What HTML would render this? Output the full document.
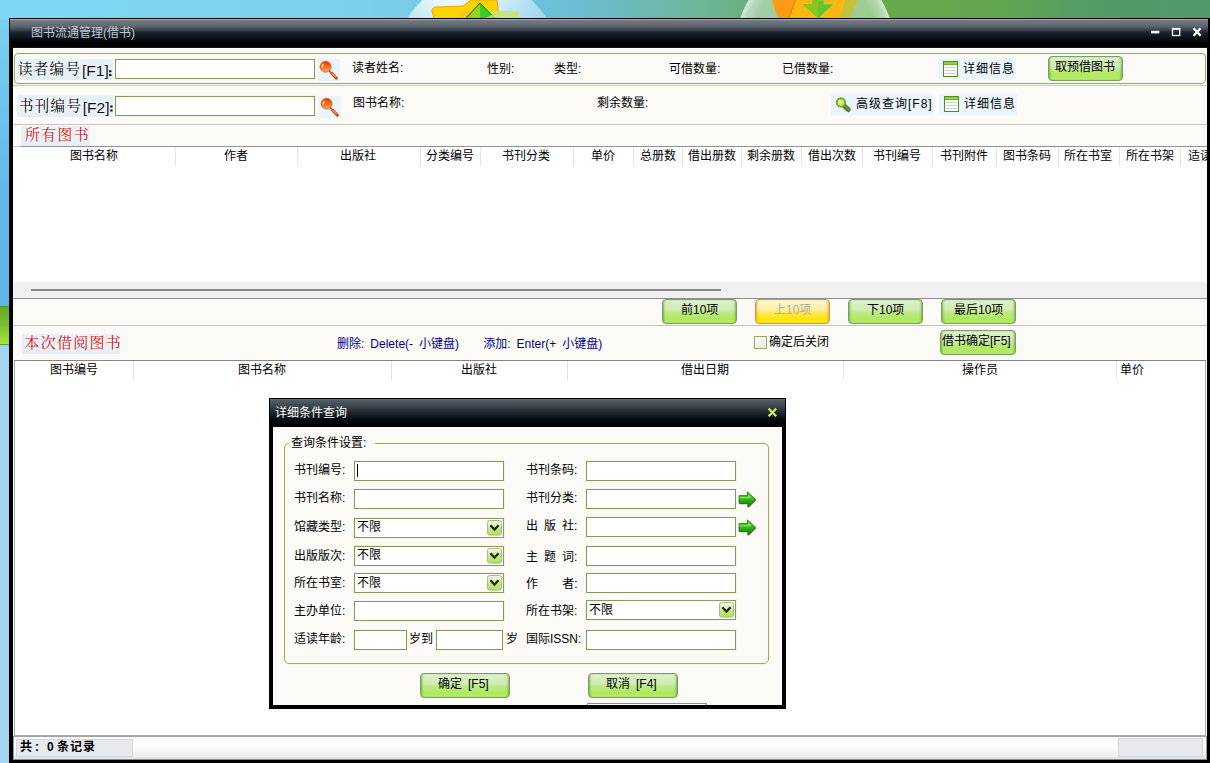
<!DOCTYPE html>
<html lang="zh-CN"><head><meta charset="utf-8"><title>图书流通管理(借书)</title><style>
html,body{margin:0;padding:0}
html{overflow:hidden;width:1210px;height:763px}
body{width:1210px;height:763px;position:relative;overflow:hidden;background:#7dd0ea;font-family:"Liberation Sans",sans-serif}
div,.a,.t{position:absolute}
.t{display:block;overflow:visible;white-space:pre;color:#000;font-size:12px;line-height:13px;word-spacing:2.7px;font-family:"Liberation Sans","Noto Sans CJK SC",sans-serif}
.k{font-family:"Liberation Serif","Noto Serif CJK SC",serif;text-shadow:0 0 2px #fff,0 0 2px #fff,0 0 3px #fff}
.lat{font-family:"Liberation Sans",sans-serif;white-space:nowrap;text-shadow:0 0 2px #fff,0 0 2px #fff}
.btn{box-sizing:border-box;border-radius:4px}
.btn.g{border:1px solid #7d9b6c;background:linear-gradient(#dcf1c9 0,#d0ebb4 42%,#bce883 56%,#afe95e 84%,#b6ee66 100%);box-shadow:inset 2px 0 2px -1px rgba(95,165,45,.75),inset -2px 0 2px -1px rgba(95,165,45,.75)}
.btn.y{border:1px solid #db943e;background:linear-gradient(#fdf6d4 0,#fcefa6 42%,#fee955 56%,#ffe508 84%,#ffe81c 100%);box-shadow:inset 2px 0 2px -1px rgba(240,150,30,.75),inset -2px 0 2px -1px rgba(240,150,30,.75)}
</style></head>
<body>
<svg class="a" style="left:0;top:0" width="1210" height="19" viewBox="0 0 1210 19">
<defs>
<linearGradient id="dg" x1="0" x2="1" y1="0" y2="0"><stop offset="0" stop-color="#7fd7f3"/><stop offset="0.3" stop-color="#7dd0ea"/><stop offset="0.45" stop-color="#6cc0dc"/><stop offset="0.5" stop-color="#6bbcc6"/><stop offset="0.54" stop-color="#6cb8ae"/><stop offset="0.58" stop-color="#6cb698"/><stop offset="0.615" stop-color="#69b080"/><stop offset="0.67" stop-color="#67ac60"/><stop offset="0.73" stop-color="#66a94a"/><stop offset="0.83" stop-color="#62a550"/><stop offset="0.9" stop-color="#549b68"/><stop offset="1" stop-color="#52996e"/></linearGradient>
<radialGradient id="bb1" cx=".38" cy="-.1" r=".75"><stop offset="0" stop-color="#fff" stop-opacity="1"/><stop offset=".35" stop-color="#fff" stop-opacity=".85"/><stop offset=".7" stop-color="#c4e6f5" stop-opacity=".75"/><stop offset="1" stop-color="#a9dbf0" stop-opacity=".7"/></radialGradient>
<radialGradient id="bb2" cx=".5" cy=".5" r=".5"><stop offset="0" stop-color="#d8ecd8" stop-opacity=".45"/><stop offset=".8" stop-color="#d8ecd8" stop-opacity=".5"/><stop offset=".93" stop-color="#e8f4e8" stop-opacity=".62"/><stop offset="1" stop-color="#f4faf4" stop-opacity=".8"/></radialGradient>
</defs>
<rect width="1210" height="19" fill="url(#dg)"/>
<circle cx="477" cy="60" r="81" fill="url(#bb1)"/>
<path d="M434 19 L432 11 Q432 7 437 7 L463 6 L471 0 L497 0 L499 19Z" fill="#ffd400" stroke="#f0a010" stroke-width="1"/>
<path d="M458 19 L459 13 Q460 11 463 11 L480 11 L480 19Z" fill="#ffc42a" opacity=".9"/><path d="M480 11 L516 11 Q519 11 519 14 L518 19 L480 19Z" fill="#c6e374" opacity=".9"/>
<path d="M465 19 L480 3 L495.5 19Z" fill="#35cf2a" stroke="#1d5c10" stroke-width="1"/>
<path d="M480 4 L480 19 L466 19Z" fill="#97d11f"/>
<path d="M484 19 L493 14 L495 19Z" fill="#a6e060"/>
<circle cx="815" cy="41" r="78" fill="url(#bb2)"/>
<path d="M772.5 0 Q774 10 779.5 19 L849 19 L857 0Z" fill="#ff9a14"/>
<path d="M795.5 0 L788.5 19 L839 19 L846 0Z" fill="#ffb512"/>
<path d="M795.5 0 L788.5 19" stroke="#e8820c" stroke-width="1.2"/>
<path d="M846 0 L857 0 L849 19 L839 19Z" fill="#c3c23c"/>
<path d="M812.3 0 L824.2 0 L824.2 4 L834 4 L818.2 18.6 L802.3 4 L812.3 4Z" fill="#67c22c" stroke="#a5e048" stroke-width=".8"/>
<path d="M812.3 0 L818.2 0 L818.2 18.6 L802.3 4 L812.3 4Z" fill="#86c81e"/>
</svg>
<div style="left:0px;top:19px;width:9px;height:287px;background:linear-gradient(#79d0f0,#62b8e8 60%,#5fb5e8)"></div>
<div style="left:0px;top:306px;width:9px;height:39px;background:linear-gradient(#62a825,#7cc030 50%,#a4e645);border-top:1px solid #4d8a2a;border-bottom:1px solid #5d9a30;box-sizing:border-box"></div>
<div style="left:0px;top:345px;width:9px;height:418px;background:#a4d2f1"></div>
<div style="left:9px;top:18px;width:1201px;height:745px;background:#000"></div>
<div style="left:10px;top:19px;width:1198px;height:29px;background:linear-gradient(#a0a5ab 0,#a0a5ab 1px,#737b83 1px,#5d666f 25%,#39424c 38%,#1d2530 46%,#131b25 56%,#000 84%,#000 93%,#0c1820 100%)"></div>
<span class="t" style="left:31px;top:26.5px;width:106px;height:16px;font-size:12px;overflow:visible;color:#c3c8ce">图书流通管理(借书)</span>
<svg class="a" style="left:1148px;top:25px" width="58" height="14" viewBox="0 0 58 14">
<rect x="3" y="5.8" width="8.3" height="2.6" fill="#fff"/>
<rect x="24.5" y="4" width="7.2" height="6.5" fill="none" stroke="#fff" stroke-width="1.3"/><rect x="23.9" y="2.9" width="8.4" height="1.6" fill="#fff"/>
<path d="M45.6 3.3 L52.6 10.7 M52.6 3.3 L45.6 10.7" stroke="#fff" stroke-width="2.4"/>
</svg>
<div style="left:13px;top:48px;width:1194px;height:712px;background:linear-gradient(#fff 0,#fff 1px,#fbfaf7 1px)"></div>
<div style="left:14px;top:53px;width:1192px;height:31px;border:1px solid #94a866;border-radius:4px;box-sizing:border-box;background:#fbfaf6;box-shadow:0 0 0 1px #f6f9e0,inset 0 0 0 1px #f9fbec"></div>
<div style="left:13px;top:85px;width:1194px;height:1px;background:#c9c9c9"></div>
<div style="left:13px;top:124px;width:1194px;height:1px;background:#c4c4c4"></div>
<div style="left:17px;top:59px;width:96px;height:21px;background:#e6f0f8"></div>
<span class="t k" style="left:18px;top:62.5px;width:65px;height:18px;font-size:14.5px;overflow:visible;color:#000;letter-spacing:1.3px">读者编号</span>
<span class="t" style="left:82px;top:60.8px;width:28px;height:22px;font-size:15.5px;line-height:20px;overflow:visible;color:#111;text-shadow:0 0 2px #fff,0 0 2px #fff">[F1]</span>
<div style="left:115px;top:59px;width:200px;height:20px;border:1px solid #86985c;box-sizing:border-box;background:#fff;box-shadow:0 0 0 1px #f5f8e4"></div>
<div style="left:17px;top:95px;width:96px;height:22px;background:#e6f0f8"></div>
<span class="t k" style="left:19px;top:99.5px;width:65px;height:18px;font-size:14.5px;overflow:visible;color:#000;letter-spacing:1.3px">书刊编号</span>
<span class="t" style="left:82.8px;top:98px;width:28px;height:22px;font-size:15.5px;line-height:20px;overflow:visible;color:#111;text-shadow:0 0 2px #fff,0 0 2px #fff">[F2]</span>
<div style="left:115px;top:96px;width:200px;height:20px;border:1px solid #86985c;box-sizing:border-box;background:#fff;box-shadow:0 0 0 1px #f5f8e4"></div>
<svg class="a" style="left:108px;top:68px" width="6" height="46"><path d="M1 2.2h2.4v2h-2.4zM1 6h2.4v2h-2.4zM2.2 37.5h2.4v2h-2.4zM2.2 41.5h2.4v2h-2.4z" fill="#111"/></svg>
<svg class="a" style="left:318px;top:59px" width="22" height="22" viewBox="0 0 22 22">
<defs><linearGradient id="mg1" x1="0" x2="0" y1="0" y2="1"><stop offset="0" stop-color="#d93a06"/><stop offset=".45" stop-color="#fb6610"/><stop offset="1" stop-color="#f7a871"/></linearGradient></defs>
<rect width="22" height="22" fill="#e9f4fb"/>
<path d="M11 11.6 L13.6 14.3" stroke="#c4531f" stroke-width="1.7" stroke-linecap="round"/>
<path d="M13.9 14.5 L18.4 19.2" stroke="#cf4a14" stroke-width="3.1" stroke-linecap="round"/>
<path d="M14.2 14.5 L17.2 17.6" stroke="#fb9784" stroke-width="1.1" stroke-linecap="round"/>
<circle cx="7.6" cy="7.7" r="5.5" fill="url(#mg1)" stroke="#d2501c" stroke-width=".7"/>
<ellipse cx="4.6" cy="6.6" rx="1" ry="2.1" fill="#ffd9b0" opacity=".85" transform="rotate(14 4.6 6.6)"/>
</svg>
<svg class="a" style="left:319px;top:96px" width="22" height="22" viewBox="0 0 22 22">
<defs><linearGradient id="mg2" x1="0" x2="0" y1="0" y2="1"><stop offset="0" stop-color="#d93a06"/><stop offset=".45" stop-color="#fb6610"/><stop offset="1" stop-color="#f7a871"/></linearGradient></defs>
<rect width="22" height="22" fill="#e9f4fb"/>
<path d="M11 11.6 L13.6 14.3" stroke="#c4531f" stroke-width="1.7" stroke-linecap="round"/>
<path d="M13.9 14.5 L18.4 19.2" stroke="#cf4a14" stroke-width="3.1" stroke-linecap="round"/>
<path d="M14.2 14.5 L17.2 17.6" stroke="#fb9784" stroke-width="1.1" stroke-linecap="round"/>
<circle cx="7.6" cy="7.7" r="5.5" fill="url(#mg2)" stroke="#d2501c" stroke-width=".7"/>
<ellipse cx="4.6" cy="6.6" rx="1" ry="2.1" fill="#ffd9b0" opacity=".85" transform="rotate(14 4.6 6.6)"/>
</svg>
<span class="t" style="left:352px;top:62px;width:54px;height:13px">读者姓名:</span>
<span class="t" style="left:487px;top:63px;width:30px;height:13px">性别:</span>
<span class="t" style="left:554px;top:63px;width:30px;height:13px">类型:</span>
<span class="t" style="left:669px;top:63px;width:54px;height:13px">可借数量:</span>
<span class="t" style="left:782px;top:63px;width:54px;height:13px">已借数量:</span>
<span class="t" style="left:353px;top:97px;width:54px;height:13px">图书名称:</span>
<span class="t" style="left:597px;top:97px;width:54px;height:13px">剩余数量:</span>
<div style="left:938px;top:58px;width:78px;height:21px;background:#ebf5fc"></div>
<svg class="a" style="left:943px;top:61px" width="15" height="16" viewBox="0 0 15 16" shape-rendering="crispEdges">
<rect x=".5" y=".5" width="14" height="15" fill="#fff" stroke="#4f8f22"/>
<rect x="1" y="1" width="13" height="2" fill="#8fd23c"/>
<rect x="1" y="3" width="13" height="1" fill="#6fb526"/>
<rect x="2" y="6" width="11" height="1" fill="#cfcfcf"/><rect x="2" y="9" width="11" height="1" fill="#cfcfcf"/><rect x="2" y="12" width="11" height="1" fill="#cfcfcf"/>
</svg>
<span class="t" style="left:963px;top:63px;width:52px;height:13px;letter-spacing:1px">详细信息</span>
<div class="btn g" style="left:1048px;top:56px;width:75px;height:25px;"></div>
<span class="t" style="left:1055px;top:61px;width:60px;height:13px">取预借图书</span>
<div style="left:831px;top:94px;width:103px;height:21px;background:#ebf5fc"></div>
<svg class="a" style="left:835px;top:96px" width="18" height="18" viewBox="0 0 18 18">
<path d="M9.4 10 L13.2 13.5" stroke="#587a2a" stroke-width="5" stroke-linecap="round"/>
<path d="M10.3 10 L13.6 13" stroke="#6b9035" stroke-width="2" stroke-linecap="round"/>
<circle cx="5.9" cy="6.4" r="4.2" fill="#cbea62" stroke="#7f9f3c" stroke-width="1.9"/>
<circle cx="5.2" cy="5.7" r="1.7" fill="#e0f58a"/>
</svg>
<span class="t" style="left:856px;top:98px;width:76px;height:13px;letter-spacing:1px">高级查询[F8]</span>
<div style="left:939px;top:94px;width:78px;height:21px;background:#ebf5fc"></div>
<svg class="a" style="left:944px;top:96px" width="15" height="16" viewBox="0 0 15 16" shape-rendering="crispEdges">
<rect x=".5" y=".5" width="14" height="15" fill="#fff" stroke="#4f8f22"/>
<rect x="1" y="1" width="13" height="2" fill="#8fd23c"/>
<rect x="1" y="3" width="13" height="1" fill="#6fb526"/>
<rect x="2" y="6" width="11" height="1" fill="#cfcfcf"/><rect x="2" y="9" width="11" height="1" fill="#cfcfcf"/><rect x="2" y="12" width="11" height="1" fill="#cfcfcf"/>
</svg>
<span class="t" style="left:964px;top:98px;width:52px;height:13px;letter-spacing:1px">详细信息</span>
<div style="left:21px;top:126px;width:69px;height:20px;background:#e6f0f8"></div>
<span class="t k" style="left:25px;top:129px;width:67px;height:18px;font-size:14.8px;overflow:visible;color:#d01010;letter-spacing:1.5px">所有图书</span>
<div style="left:14px;top:146px;width:1192px;height:136px;background:#fff"></div>
<div style="left:21px;top:146px;width:1186px;height:1px;background:#8e959b"></div>
<div style="left:13px;top:146px;width:8px;height:1px;background:#c8c8c8"></div>
<span class="t" style="left:70px;top:150px;width:48px;height:13px">图书名称</span>
<div style="left:175px;top:147px;width:1px;height:19px;background:#e3e3e3"></div>
<span class="t" style="left:224px;top:150px;width:24px;height:13px">作者</span>
<div style="left:297px;top:147px;width:1px;height:19px;background:#e3e3e3"></div>
<span class="t" style="left:340px;top:150px;width:36px;height:13px">出版社</span>
<div style="left:420px;top:147px;width:1px;height:19px;background:#e3e3e3"></div>
<span class="t" style="left:426px;top:150px;width:48px;height:13px">分类编号</span>
<div style="left:480px;top:147px;width:1px;height:19px;background:#e3e3e3"></div>
<span class="t" style="left:502px;top:150px;width:48px;height:13px">书刊分类</span>
<div style="left:573px;top:147px;width:1px;height:19px;background:#e3e3e3"></div>
<span class="t" style="left:591px;top:150px;width:24px;height:13px">单价</span>
<div style="left:633px;top:147px;width:1px;height:19px;background:#e3e3e3"></div>
<span class="t" style="left:640px;top:150px;width:36px;height:13px">总册数</span>
<div style="left:682px;top:147px;width:1px;height:19px;background:#e3e3e3"></div>
<span class="t" style="left:688px;top:150px;width:48px;height:13px">借出册数</span>
<div style="left:741px;top:147px;width:1px;height:19px;background:#e3e3e3"></div>
<span class="t" style="left:747px;top:150px;width:48px;height:13px">剩余册数</span>
<div style="left:801px;top:147px;width:1px;height:19px;background:#e3e3e3"></div>
<span class="t" style="left:808px;top:150px;width:48px;height:13px">借出次数</span>
<div style="left:862px;top:147px;width:1px;height:19px;background:#e3e3e3"></div>
<span class="t" style="left:873px;top:150px;width:48px;height:13px">书刊编号</span>
<div style="left:932px;top:147px;width:1px;height:19px;background:#e3e3e3"></div>
<span class="t" style="left:940px;top:150px;width:48px;height:13px">书刊附件</span>
<div style="left:996px;top:147px;width:1px;height:19px;background:#e3e3e3"></div>
<span class="t" style="left:1003px;top:150px;width:48px;height:13px">图书条码</span>
<div style="left:1058px;top:147px;width:1px;height:19px;background:#e3e3e3"></div>
<span class="t" style="left:1064px;top:150px;width:48px;height:13px">所在书室</span>
<div style="left:1119px;top:147px;width:1px;height:19px;background:#e3e3e3"></div>
<span class="t" style="left:1126px;top:150px;width:48px;height:13px">所在书架</span>
<div style="left:1180px;top:147px;width:1px;height:19px;background:#e3e3e3"></div>
<span class="t" style="left:1188px;top:150px;width:22px;height:13px;overflow:hidden">适读年龄</span>
<div style="left:14px;top:282px;width:1193px;height:16px;background:#f0f0f0"></div>
<div style="left:31px;top:289px;width:690px;height:2px;background:#8a8a8a"></div>
<div style="left:13px;top:298px;width:1194px;height:1px;background:#8f8f8f"></div>
<div style="left:13px;top:325px;width:1194px;height:1px;background:#c2c2c2"></div>
<div class="btn g" style="left:662px;top:299px;width:75px;height:25px;"></div>
<span class="t" style="left:681px;top:304px;width:36px;height:13px">前10项</span>
<div class="btn y" style="left:755px;top:299px;width:75px;height:25px;"></div>
<span class="t" style="left:774px;top:304px;width:36px;height:13px;color:#b3ab93">上10项</span>
<div class="btn g" style="left:848px;top:299px;width:75px;height:25px;"></div>
<span class="t" style="left:867px;top:304px;width:36px;height:13px">下10项</span>
<div class="btn g" style="left:941px;top:299px;width:75px;height:25px;"></div>
<span class="t" style="left:954px;top:304px;width:48px;height:13px">最后10项</span>
<div class="btn g" style="left:940px;top:330px;width:76px;height:25px;"></div>
<span class="t" style="left:942px;top:335px;width:72px;height:13px">借书确定[F5]</span>
<div style="left:22px;top:334px;width:98px;height:20px;background:#e6f0f8"></div>
<span class="t k" style="left:24.5px;top:337px;width:99px;height:18px;font-size:15px;overflow:visible;color:#d01010;letter-spacing:1.25px">本次借阅图书</span>
<span class="t" style="left:337px;top:338px;width:282px;height:13px;color:#00008c">删除: Delete(- 小键盘)    添加: Enter(+ 小键盘)</span>
<div style="left:754px;top:336px;width:13px;height:13px;border:1px solid #93ab63;box-sizing:border-box;background:linear-gradient(135deg,#fff,#e4e4e0)"></div>
<span class="t" style="left:769px;top:336px;width:60px;height:13px">确定后关闭</span>
<div style="left:14px;top:360px;width:1192px;height:376px;background:#fff;border:1px solid #a9a9a9;border-top-color:#858585;box-sizing:border-box"></div>
<span class="t" style="left:50px;top:364px;width:48px;height:13px">图书编号</span>
<div style="left:133px;top:361px;width:1px;height:19px;background:#e3e3e3"></div>
<span class="t" style="left:238px;top:364px;width:48px;height:13px">图书名称</span>
<div style="left:391px;top:361px;width:1px;height:19px;background:#e3e3e3"></div>
<span class="t" style="left:461px;top:364px;width:36px;height:13px">出版社</span>
<div style="left:567px;top:361px;width:1px;height:19px;background:#e3e3e3"></div>
<span class="t" style="left:681px;top:364px;width:48px;height:13px">借出日期</span>
<div style="left:843px;top:361px;width:1px;height:19px;background:#e3e3e3"></div>
<span class="t" style="left:962px;top:364px;width:36px;height:13px">操作员</span>
<div style="left:1116px;top:361px;width:1px;height:19px;background:#e3e3e3"></div>
<span class="t" style="left:1120px;top:364px;width:24px;height:13px">单价</span>
<div style="left:13px;top:736px;width:1194px;height:24px;background:linear-gradient(#a4a4a4 0,#a4a4a4 1px,#fafafa 1px,#fff 40%,#ececec 85%,#d8d8d8);"></div>
<div style="left:16px;top:739px;width:117px;height:18px;background:#e7eaec;border:1px solid #d3d7da;box-sizing:border-box"></div>
<span class="t" style="left:20px;top:741px;width:13px;height:13px;font-weight:bold">共</span>
<span class="t" style="left:33px;top:741px;width:7px;height:13px;font-weight:bold;padding-left:2px;box-sizing:border-box">:</span>
<span class="t" style="left:47px;top:741px;width:7px;height:13px;font-weight:bold">0</span>
<span class="t" style="left:57px;top:741px;width:40px;height:13px;font-weight:bold;letter-spacing:1px">条记录</span>
<div style="left:13px;top:736px;width:1px;height:24px;background:#9a9a9a"></div>
<div style="left:13px;top:759px;width:1194px;height:1px;background:#8c8c8c"></div>
<div style="left:1206px;top:736px;width:1px;height:24px;background:#9a9a9a"></div>
<div style="left:1118px;top:738px;width:85px;height:19px;background:#e7eaec;border:1px solid #d3d7da;box-sizing:border-box"></div>
<div style="left:269px;top:398px;width:517px;height:311px;background:#000"></div>
<div style="left:270px;top:399px;width:515px;height:28px;background:linear-gradient(#6a727a 0,#545d65 1px,#454e57 18%,#20282f 48%,#070c11 72%,#000 90%)"></div>
<span class="t" style="left:275px;top:407px;width:72px;height:13px;color:#fff">详细条件查询</span>
<svg class="a" style="left:767px;top:407px" width="11" height="11" viewBox="0 0 11 11"><path d="M1.6 1.6 L9.2 9.2 M9.2 1.6 L1.6 9.2" stroke="#cfe85a" stroke-width="2.2"/></svg>
<div style="left:273px;top:427px;width:509px;height:278px;background:#fbfaf7;overflow:hidden"><div style="left:314px;top:276px;width:118px;height:10px;border:1px solid #86985c;background:#fff"></div></div>
<div style="left:284px;top:443px;width:485px;height:221px;border:1px solid #98ac6a;border-radius:5px;box-sizing:border-box;box-shadow:0 0 0 1px #f6f9e0,inset 0 0 0 1px #f9fbec"></div>
<div style="left:289px;top:440px;width:86px;height:8px;background:#fbfaf7"></div>
<span class="t" style="left:291px;top:437px;width:78px;height:13px">查询条件设置:</span>
<span class="t" style="left:294px;top:464px;width:54px;height:13px">书刊编号:</span>
<span class="t" style="left:526px;top:464px;width:54px;height:13px">书刊条码:</span>
<div style="left:354px;top:461px;width:150px;height:20px;border:1px solid #86985c;box-sizing:border-box;background:#fff;box-shadow:0 0 0 1px #f5f8e4"></div>
<div style="left:586px;top:461px;width:150px;height:20px;border:1px solid #86985c;box-sizing:border-box;background:#fff;box-shadow:0 0 0 1px #f5f8e4"></div>
<span class="t" style="left:294px;top:492px;width:54px;height:13px">书刊名称:</span>
<span class="t" style="left:526px;top:492px;width:54px;height:13px">书刊分类:</span>
<div style="left:354px;top:489px;width:150px;height:20px;border:1px solid #86985c;box-sizing:border-box;background:#fff;box-shadow:0 0 0 1px #f5f8e4"></div>
<div style="left:586px;top:489px;width:150px;height:20px;border:1px solid #86985c;box-sizing:border-box;background:#fff;box-shadow:0 0 0 1px #f5f8e4"></div>
<svg class="a" style="left:738px;top:490.5px" width="19" height="19" viewBox="0 0 19 19">
<defs><linearGradient id="ar1" x1="0" x2="0" y1="0" y2="1"><stop offset="0" stop-color="#3fbf1e"/><stop offset=".3" stop-color="#52cc2c"/><stop offset=".55" stop-color="#2fae16"/><stop offset="1" stop-color="#167a0b"/></linearGradient></defs>
<path d="M1.8 5.4 H10 V1.6 L18.3 9.3 L10.6 17 V13.2 H1.8Z" fill="#3a4a2a" opacity=".75"/>
<path d="M1 4.6 H9.3 V0.8 L17.5 8.5 L9.8 16.2 V12.4 H1Z" fill="url(#ar1)" stroke="#1f6f12" stroke-width=".8" stroke-linejoin="round"/>
<path d="M1.8 5.9 H10 L10 3.4 L13.4 6.6 L10.4 7.6 H1.8Z" fill="#8be85c" opacity=".75"/>
</svg>
<span class="t" style="left:294px;top:521px;width:54px;height:13px">馆藏类型:</span>
<span class="t" style="left:526px;top:520px;width:54px;height:13px">出 版 社:</span>
<div style="left:354px;top:518px;width:150px;height:20px;border:1px solid #86985c;box-sizing:border-box;background:#fff;box-shadow:0 0 0 1px #f5f8e4"></div>
<span class="t" style="left:357px;top:521px;width:24px;height:13px">不限</span>
<svg class="a" style="left:487px;top:520px" width="15" height="16" viewBox="0 0 15 16">
<defs><linearGradient id="dd1" x1="0" x2="0" y1="0" y2="1"><stop offset="0" stop-color="#f1f8e6"/><stop offset=".4" stop-color="#d9eeb0"/><stop offset=".6" stop-color="#c2e67c"/><stop offset="1" stop-color="#b0e458"/></linearGradient></defs>
<rect x=".5" y=".5" width="14" height="14.6" rx="2" fill="url(#dd1)" stroke="#a5bb84"/>
<path d="M3.4 5.2 L7.5 9.6 L11.6 5.2" fill="none" stroke="#25251a" stroke-width="2.3"/>
</svg>
<div style="left:586px;top:517px;width:150px;height:20px;border:1px solid #86985c;box-sizing:border-box;background:#fff;box-shadow:0 0 0 1px #f5f8e4"></div>
<svg class="a" style="left:738px;top:518.5px" width="19" height="19" viewBox="0 0 19 19">
<defs><linearGradient id="ar2" x1="0" x2="0" y1="0" y2="1"><stop offset="0" stop-color="#3fbf1e"/><stop offset=".3" stop-color="#52cc2c"/><stop offset=".55" stop-color="#2fae16"/><stop offset="1" stop-color="#167a0b"/></linearGradient></defs>
<path d="M1.8 5.4 H10 V1.6 L18.3 9.3 L10.6 17 V13.2 H1.8Z" fill="#3a4a2a" opacity=".75"/>
<path d="M1 4.6 H9.3 V0.8 L17.5 8.5 L9.8 16.2 V12.4 H1Z" fill="url(#ar2)" stroke="#1f6f12" stroke-width=".8" stroke-linejoin="round"/>
<path d="M1.8 5.9 H10 L10 3.4 L13.4 6.6 L10.4 7.6 H1.8Z" fill="#8be85c" opacity=".75"/>
</svg>
<span class="t" style="left:294px;top:550px;width:54px;height:13px">出版版次:</span>
<span class="t" style="left:526px;top:551px;width:54px;height:13px">主 题 词:</span>
<div style="left:354px;top:546px;width:150px;height:20px;border:1px solid #86985c;box-sizing:border-box;background:#fff;box-shadow:0 0 0 1px #f5f8e4"></div>
<span class="t" style="left:357px;top:549px;width:24px;height:13px">不限</span>
<svg class="a" style="left:487px;top:548px" width="15" height="16" viewBox="0 0 15 16">
<defs><linearGradient id="dd2" x1="0" x2="0" y1="0" y2="1"><stop offset="0" stop-color="#f1f8e6"/><stop offset=".4" stop-color="#d9eeb0"/><stop offset=".6" stop-color="#c2e67c"/><stop offset="1" stop-color="#b0e458"/></linearGradient></defs>
<rect x=".5" y=".5" width="14" height="14.6" rx="2" fill="url(#dd2)" stroke="#a5bb84"/>
<path d="M3.4 5.2 L7.5 9.6 L11.6 5.2" fill="none" stroke="#25251a" stroke-width="2.3"/>
</svg>
<div style="left:586px;top:546px;width:150px;height:20px;border:1px solid #86985c;box-sizing:border-box;background:#fff;box-shadow:0 0 0 1px #f5f8e4"></div>
<span class="t" style="left:294px;top:577px;width:54px;height:13px">所在书室:</span>
<span class="t" style="left:526px;top:578px;width:54px;height:13px">作    者:</span>
<div style="left:354px;top:573px;width:150px;height:20px;border:1px solid #86985c;box-sizing:border-box;background:#fff;box-shadow:0 0 0 1px #f5f8e4"></div>
<span class="t" style="left:357px;top:577px;width:24px;height:13px">不限</span>
<svg class="a" style="left:487px;top:575px" width="15" height="16" viewBox="0 0 15 16">
<defs><linearGradient id="dd3" x1="0" x2="0" y1="0" y2="1"><stop offset="0" stop-color="#f1f8e6"/><stop offset=".4" stop-color="#d9eeb0"/><stop offset=".6" stop-color="#c2e67c"/><stop offset="1" stop-color="#b0e458"/></linearGradient></defs>
<rect x=".5" y=".5" width="14" height="14.6" rx="2" fill="url(#dd3)" stroke="#a5bb84"/>
<path d="M3.4 5.2 L7.5 9.6 L11.6 5.2" fill="none" stroke="#25251a" stroke-width="2.3"/>
</svg>
<div style="left:586px;top:573px;width:150px;height:20px;border:1px solid #86985c;box-sizing:border-box;background:#fff;box-shadow:0 0 0 1px #f5f8e4"></div>
<span class="t" style="left:294px;top:605px;width:54px;height:13px">主办单位:</span>
<span class="t" style="left:526px;top:605px;width:54px;height:13px">所在书架:</span>
<div style="left:354px;top:601px;width:150px;height:20px;border:1px solid #86985c;box-sizing:border-box;background:#fff;box-shadow:0 0 0 1px #f5f8e4"></div>
<div style="left:586px;top:600px;width:150px;height:20px;border:1px solid #86985c;box-sizing:border-box;background:#fff;box-shadow:0 0 0 1px #f5f8e4"></div>
<span class="t" style="left:589px;top:604px;width:24px;height:13px">不限</span>
<svg class="a" style="left:719px;top:602px" width="15" height="16" viewBox="0 0 15 16">
<defs><linearGradient id="dd4" x1="0" x2="0" y1="0" y2="1"><stop offset="0" stop-color="#f1f8e6"/><stop offset=".4" stop-color="#d9eeb0"/><stop offset=".6" stop-color="#c2e67c"/><stop offset="1" stop-color="#b0e458"/></linearGradient></defs>
<rect x=".5" y=".5" width="14" height="14.6" rx="2" fill="url(#dd4)" stroke="#a5bb84"/>
<path d="M3.4 5.2 L7.5 9.6 L11.6 5.2" fill="none" stroke="#25251a" stroke-width="2.3"/>
</svg>
<span class="t" style="left:294px;top:633px;width:54px;height:13px">适读年龄:</span>
<span class="t" style="left:526px;top:633px;width:54px;height:13px">国际ISSN:</span>
<div style="left:354px;top:630px;width:53px;height:20px;border:1px solid #86985c;box-sizing:border-box;background:#fff;box-shadow:0 0 0 1px #f5f8e4"></div>
<span class="t" style="left:409px;top:633px;width:24px;height:13px">岁到</span>
<div style="left:436px;top:630px;width:67px;height:20px;border:1px solid #86985c;box-sizing:border-box;background:#fff;box-shadow:0 0 0 1px #f5f8e4"></div>
<span class="t" style="left:506px;top:633px;width:12px;height:13px">岁</span>
<div style="left:586px;top:630px;width:150px;height:20px;border:1px solid #86985c;box-sizing:border-box;background:#fff;box-shadow:0 0 0 1px #f5f8e4"></div>
<div style="left:357px;top:464px;width:1px;height:13px;background:#000"></div>
<div class="btn g" style="left:420px;top:673px;width:90px;height:25px;"></div>
<span class="t" style="left:438px;top:678px;width:54px;height:13px">确定 [F5]</span>
<div class="btn g" style="left:588px;top:673px;width:90px;height:25px;"></div>
<span class="t" style="left:606px;top:678px;width:54px;height:13px">取消 [F4]</span>
</body></html>
